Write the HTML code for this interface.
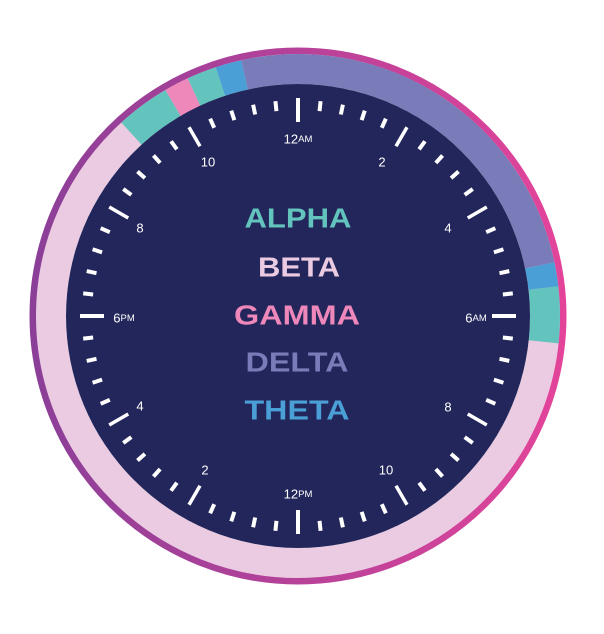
<!DOCTYPE html>
<html><head><meta charset="utf-8"><style>
html,body{margin:0;padding:0;background:#fff;width:604px;height:634px;overflow:hidden}
svg{display:block}
.l{font-family:"Liberation Sans",sans-serif;font-size:13px;fill:#fff;text-anchor:middle;dominant-baseline:central}
.s{font-size:9.5px}
.b{font-family:"Liberation Sans",sans-serif;font-weight:bold;font-size:28px;text-anchor:middle;dominant-baseline:central}
</style></head><body>
<svg width="604" height="634" viewBox="0 0 604 634" xmlns="http://www.w3.org/2000/svg">
<defs><linearGradient id="g" x1="0" x2="1" y1="0" y2="0"><stop offset="0" stop-color="#8b3f98"/><stop offset="1" stop-color="#e3449a"/></linearGradient></defs>
<circle cx="298" cy="316" r="265" fill="none" stroke="url(#g)" stroke-width="7"/>
<circle cx="298" cy="316" r="247" fill="none" stroke="#ebcbe2" stroke-width="30"/>
<g id="segs" fill="none" stroke-width="30"></g>
<circle cx="298" cy="316" r="232" fill="#22265a"/>
<g id="ticks" stroke="#fff" stroke-linecap="butt"></g>
<text class="l" x="298" y="139">12<tspan class="s">AM</tspan></text>
<text class="l" x="382" y="162">2</text>
<text class="l" x="448" y="228">4</text>
<text class="l" x="476" y="318">6<tspan class="s">AM</tspan></text>
<text class="l" x="448" y="407">8</text>
<text class="l" x="386" y="470">10</text>
<text class="l" x="298" y="494">12<tspan class="s">PM</tspan></text>
<text class="l" x="205" y="470">2</text>
<text class="l" x="140" y="406">4</text>
<text class="l" x="124" y="318">6<tspan class="s">PM</tspan></text>
<text class="l" x="140" y="228">8</text>
<text class="l" x="208" y="162">10</text>
<text class="b" x="298" y="218" fill="#63c4be" textLength="107" lengthAdjust="spacingAndGlyphs">ALPHA</text>
<text class="b" x="299" y="267" fill="#ebcbe2" textLength="82" lengthAdjust="spacingAndGlyphs">BETA</text>
<text class="b" x="297" y="315" fill="#ee88bb" textLength="126" lengthAdjust="spacingAndGlyphs">GAMMA</text>
<text class="b" x="297" y="362" fill="#7a7cba" textLength="103" lengthAdjust="spacingAndGlyphs">DELTA</text>
<text class="b" x="297" y="410" fill="#4a9fd6" textLength="105" lengthAdjust="spacingAndGlyphs">THETA</text>
</svg>
<script>
var cx=298,cy=316,NS="http://www.w3.org/2000/svg";
function P(r,a){a=a*Math.PI/180;return [cx+r*Math.sin(a),cy-r*Math.cos(a)];}
var segs=[[-42.4,-30.4,"#63c4be"],[-30.4,-24.9,"#ee88bb"],[-24.9,-18.3,"#63c4be"],[-18.3,-12.5,"#4a9fd6"],[-12.5,78.2,"#7a7cba"],[78.2,83.5,"#4a9fd6"],[83.5,96,"#63c4be"]];
var g=document.getElementById("segs");
segs.forEach(function(s){var r=247,a=P(r,s[0]),b=P(r,s[1]);var p=document.createElementNS(NS,"path");
p.setAttribute("d","M"+a[0]+" "+a[1]+" A"+r+" "+r+" 0 "+((s[1]-s[0])>180?1:0)+" 1 "+b[0]+" "+b[1]);p.setAttribute("stroke",s[2]);g.appendChild(p);});
var t=document.getElementById("ticks");
for(var i=0;i<60;i++){var a=i*6,r1,r2,w;
if(i%15==0){r1=194;r2=218;w=4;}else if(i%5==0){r1=196;r2=218;w=3.5;}else{r1=206;r2=216;w=4;}
var p1=P(r1,a),p2=P(r2,a);var l=document.createElementNS(NS,"line");
l.setAttribute("x1",p1[0]);l.setAttribute("y1",p1[1]);l.setAttribute("x2",p2[0]);l.setAttribute("y2",p2[1]);l.setAttribute("stroke-width",w);t.appendChild(l);}
</script>
</body></html>
